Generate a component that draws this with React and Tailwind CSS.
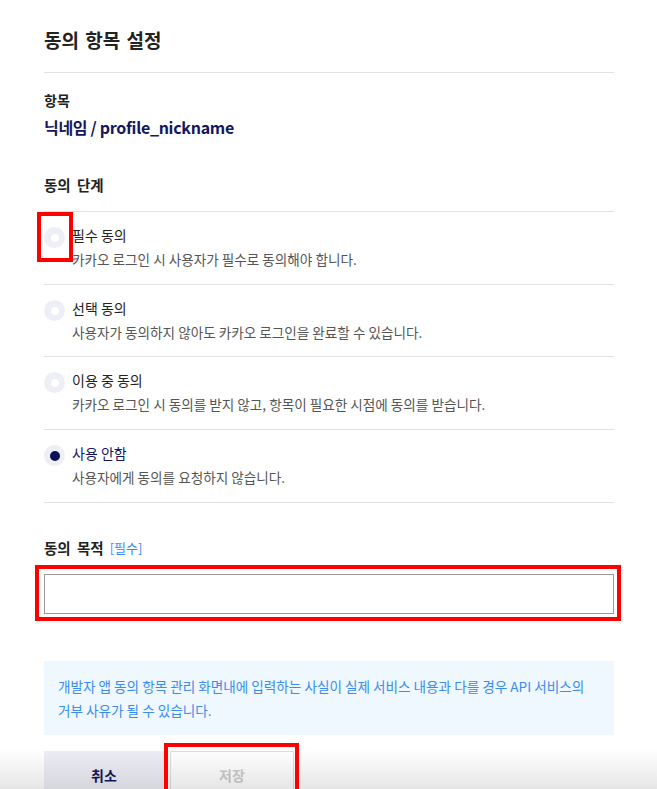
import { useState } from 'react';

const options = [
  { id: 'required', title: '필수 동의', desc: '카카오 로그인 시 사용자가 필수로 동의해야 합니다.' },
  { id: 'optional', title: '선택 동의', desc: '사용자가 동의하지 않아도 카카오 로그인을 완료할 수 있습니다.' },
  { id: 'inuse', title: '이용 중 동의', desc: '카카오 로그인 시 동의를 받지 않고, 항목이 필요한 시점에 동의를 받습니다.' },
  { id: 'none', title: '사용 안함', desc: '사용자에게 동의를 요청하지 않습니다.' },
];

export default function App() {
  const [level, setLevel] = useState('none');
  const [purpose, setPurpose] = useState('');

  return (
    <div
      className="relative h-[789px] w-full overflow-hidden bg-white text-[#222]"
      style={{ fontFamily: '"Noto Sans CJK KR", "Noto Sans", sans-serif' }}
    >
      <div className="mx-[44px] w-[570px]">
        <h1 className="pt-[27px] pb-[19px] text-[19px] font-bold leading-[26px] [word-spacing:2px]">동의 항목 설정</h1>
        <div className="border-t border-[#e2e2e2]" />

        <div className="mt-[17px] text-[14px] font-bold leading-[20px]">항목</div>
        <div className="mt-[5px] text-[16px] font-bold leading-[24px] text-[#14175e] tracking-[-0.3px]">닉네임 / profile_nickname</div>

        <div className="mt-[36px] mb-[16px] text-[14.5px] font-bold leading-[20px] [word-spacing:3px]">동의 단계</div>

        <div className="border-t border-[#e2e2e2]">
          {options.map((o, i) => {
            const on = level === o.id;
            return (
              <label
                key={o.id}
                className={`flex cursor-pointer border-b border-[#e2e2e2] pt-[13px] ${i === 1 ? 'pb-[14px]' : 'pb-[15px]'}`}
                onClick={() => setLevel(o.id)}
              >
                <span className="mt-[2px] flex h-[21px] w-[21px] shrink-0 items-center justify-center rounded-full bg-[#eeeef7]">
                  <span className={`rounded-full ${on ? 'h-[10px] w-[10px] bg-[#0c1057]' : 'h-[8px] w-[8px] bg-white'}`} />
                </span>
                <span className="ml-[7px] flex flex-col">
                  <span className={`text-[14px] leading-[20px] ${on ? 'text-[#14175e]' : 'text-[#222]'}`}>{o.title}</span>
                  <span className="mt-[4px] text-[13.6px] leading-[20px] text-[#555]">{o.desc}</span>
                </span>
              </label>
            );
          })}
        </div>

        <div className="mt-[35px] flex items-center text-[14.5px] font-bold leading-[20px] [word-spacing:3px]">
          동의 목적
          <span className="ml-[6px] text-[13px] font-normal text-[#3a8cf0]">[필수]</span>
        </div>
        <input
          value={purpose}
          onChange={(e) => setPurpose(e.target.value)}
          className="mt-[16px] block h-[40px] w-full border border-[#999] px-3 text-[14px] outline-none"
        />

        <div className="mt-[47px] bg-[#eff7ff] px-[14px] py-[13px] text-[13.6px] leading-[24px] text-[#3a8cf0]">
          개발자 앱 동의 항목 관리 화면내에 입력하는 사실이 실제 서비스 내용과 다를 경우 API 서비스의<br />
          거부 사유가 될 수 있습니다.
        </div>

        <div className="mt-[16px] flex gap-[6px]">
          <button className="h-[48px] w-[120px] bg-[#ededf5] text-[14px] font-bold text-[#14175e]">취소</button>
          <button disabled className="h-[48px] w-[124px] border border-[#ddd] bg-white text-[14px] font-bold text-[#ccc]">저장</button>
        </div>
      </div>

      <div className="pointer-events-none absolute bottom-0 left-0 h-[40px] w-full bg-gradient-to-b from-transparent to-black/10" />

      <div className="pointer-events-none absolute left-[37px] top-[212px] h-[50px] w-[36px] border-4 border-[#ff0000]" />
      <div className="pointer-events-none absolute left-[35px] top-[565px] h-[56px] w-[586px] border-4 border-[#ff0000]" />
      <div className="pointer-events-none absolute left-[164px] top-[743px] h-[52px] w-[135px] border-4 border-[#ff0000]" />
    </div>
  );
}
